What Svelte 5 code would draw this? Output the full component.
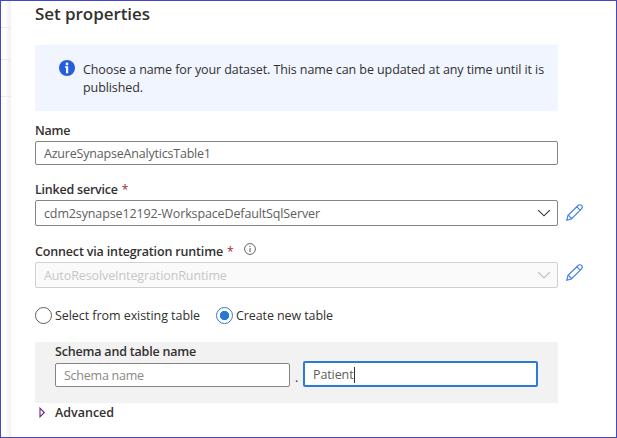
<script>
  let datasetName = $state('AzureSynapseAnalyticsTable1');
  let mode = $state('new');
  const strips = [27, 59, 96];
</script>

{#snippet chevron()}
  <svg class="chevron" width="14" height="8" viewBox="0 0 14 8"><path d="M1.2 1.2 7 6.8l5.8-5.6" /></svg>
{/snippet}

{#snippet pencil()}
  <svg class="pencil" width="17" height="17" viewBox="0 0 17 17">
    <path d="M.8 16.2 2 11.4 12.1 1.5a2.3 2.3 0 0 1 3.4 3.3L5.4 15zM2 11.4c1.3.1 1.9.6 1.9 1.7 1 .1 1.5.8 1.5 1.9M10.8 2.8l3.4 3.4" />
  </svg>
{/snippet}

<div class="frame">
  <div class="rail">
    <svg width="10" height="436">
      {#each strips as y}<path d="M0 {y - 0.5}h10" stroke="#ebebeb" />{/each}
    </svg>
  </div>
  <main>
    <h1><span class="t-title">Set properties</span></h1>

    <section class="notice">
      <svg width="16" height="16" viewBox="0 0 16 16">
        <circle cx="8" cy="8" r="8" fill="#245edc" />
        <circle cx="8" cy="4" r="1.4" fill="#fff" />
        <path d="M6 6.3h3.2v7H7V7.8H6z" fill="#fff" />
      </svg>
      <p><span class="t-note">Choose a name for your dataset. This name can be updated at any time until it is</span><br /><span class="t-note">published.</span></p>
    </section>

    <div class="label name-label"><span class="t-name">Name</span></div>
    <div class="box input"><span class="t-dataset">{datasetName}</span></div>

    <div class="label linked-label"><span class="t-linked">Linked service</span><i>*</i></div>
    <div class="row">
      <div class="box select"><span class="t-cdm">cdm2synapse12192-WorkspaceDefaultSqlServer</span>{@render chevron()}</div>
      {@render pencil()}
    </div>

    <div class="label runtime-label">
      <span class="t-connect">Connect via integration runtime</span><i>*</i>
      <svg class="hint" width="12" height="12" viewBox="0 0 12 12">
        <circle cx="6" cy="6" r="5.4" fill="none" stroke="#555" stroke-width=".9" />
        <path d="M6 5v4M6 3v1" stroke="#555" />
      </svg>
    </div>
    <div class="row second">
      <div class="box select disabled"><span class="t-auto">AutoResolveIntegrationRuntime</span>{@render chevron()}</div>
      {@render pencil()}
    </div>

    <div class="radios">
      <button class="radio first" class:on={mode === 'existing'} onclick={() => (mode = 'existing')}>
        <b></b><span class="t-existing">Select from existing table</span>
      </button>
      <button class="radio" class:on={mode === 'new'} onclick={() => (mode = 'new')}>
        <b></b><span class="t-new">Create new table</span>
      </button>
    </div>

    <section class="schema">
      <div class="label schema-label"><span class="t-schema">Schema and table name</span></div>
      <div class="pair">
        <div class="box input half"><span class="t-placeholder">Schema name</span></div>
        <span class="dot">.</span>
        <div class="box active"><span class="t-patient">Patient</span><em></em></div>
      </div>
    </section>

    <div class="advanced">
      <svg width="7" height="11" viewBox="0 0 7 11"><path d="M1 1.2v8.6l4.3-4.3z" fill="none" stroke="#68217a" stroke-width="1.1" /></svg>
      <span class="t-advanced">Advanced</span>
    </div>
  </main>
</div>

<style>
  .frame {
    box-sizing: border-box;
    width: 617px;
    height: 438px;
    display: flex;
    overflow: hidden;
    border: 1px solid #4147c5;
    background: #fff;
    color: #323130;
    font: 12.5px/18px 'Open Sans', 'Noto Sans', sans-serif;
  }
  span { white-space: nowrap; }
  .rail {
    flex: none;
    width: 10px;
    background: linear-gradient(90deg, #fdfdfd 40%, #f0f0f0);
  }
  .rail svg { display: block; }
  main { width: 560px; padding-left: 24px; }
  h1 {
    margin: 0;
    height: 44px;
    font-size: 17px;
    line-height: 26px;
    font-weight: 600;
  }
  .t-title { letter-spacing: -0.06px; }
  .t-note { letter-spacing: -0.09px; }
  .t-name { letter-spacing: -0.25px; }
  .t-dataset { letter-spacing: -0.2px; }
  .t-linked { letter-spacing: -0.22px; }
  .t-cdm { letter-spacing: -0.13px; }
  .t-connect { letter-spacing: -0.16px; }
  .t-auto { letter-spacing: -0.1px; }
  .t-existing { letter-spacing: -0.06px; }
  .t-new { letter-spacing: -0.1px; }
  .t-schema { letter-spacing: -0.19px; }
  .t-placeholder { letter-spacing: -0.24px; color: #8a8886; }
  .t-patient { letter-spacing: -0.1px; }
  .notice {
    box-sizing: border-box;
    width: 523px;
    height: 66px;
    padding: 15px 0 0 24px;
    display: flex;
    gap: 8px;
    background: #f0f5ff;
  }
  .notice svg { flex: none; }
  .notice p { margin: 1px 0 0; }
  .label {
    box-sizing: border-box;
    display: flex;
    align-items: flex-end;
    font-weight: 600;
  }
  .label i {
    font-style: normal;
    font-weight: 400;
    color: #a4262c;
    margin-left: 4px;
    font-size: 12px;
  }
  .name-label { height: 30px; padding-bottom: 1px; }
  .linked-label { height: 35px; padding-bottom: 1px; }
  .runtime-label { height: 36px; padding-bottom: 1px; }
  .hint { margin: 0 0 6px 10px; }
  .box {
    box-sizing: border-box;
    width: 523px;
    border: 1px solid #868584;
    border-radius: 2px;
    background: #fff;
    color: #605e5c;
    padding: 1px 8px 0;
    display: flex;
    align-items: center;
  }
  .input { height: 24px; padding-top: 2px; }
  .select {
    height: 26px;
    padding-top: 2px;
    padding-right: 6px;
    justify-content: space-between;
  }
  .chevron { margin-bottom: 2px; }
  .chevron path { fill: none; stroke: #323130; stroke-width: 1.1; }
  .row { display: flex; gap: 8px; height: 26px; }
  .pencil { margin-top: 4px; }
  .second .pencil { margin-top: 2px; }
  .pencil path { fill: none; stroke: #407fe4; stroke-width: 1.15; }
  .disabled {
    background: #fafafa;
    border-color: #d2d0ce;
    color: #c8c6c4;
  }
  .disabled .chevron path { stroke: #b8b6b4; }
  .radios { display: flex; height: 54px; padding-top: 18px; box-sizing: border-box; }
  .radio {
    width: 181px;
    height: 19px;
    padding: 1px 0 0;
    display: flex;
    gap: 3px;
    border: 0;
    background: none;
    font: inherit;
    color: #323130;
    text-align: left;
  }
  .radio b {
    box-sizing: border-box;
    flex: none;
    width: 17px;
    height: 17px;
    border: 1px solid #605e5c;
    border-radius: 50%;
  }
  .radio.on b {
    border-color: #2b7bd6;
    background: radial-gradient(circle, #2878d8 4.3px, #fff 5px);
  }
  .schema {
    box-sizing: border-box;
    width: 523px;
    height: 61px;
    padding-left: 20px;
    background: #f2f2f2;
  }
  .schema-label { height: 19px; }
  .pair { display: flex; height: 26px; align-items: flex-end; }
  .half { width: 235px; }
  .dot { width: 8px; padding-left: 5px; height: 18px; }
  .active { width: 235px; height: 26px; padding: 1px 8px 0; border: 2px solid #2b7bd6; }
  .active em { width: 1px; height: 16px; background: #323130; }
  .advanced { display: flex; align-items: center; height: 19px; font-weight: 600; }
  .advanced svg { margin: 0 9px 0 4px; }
</style>
